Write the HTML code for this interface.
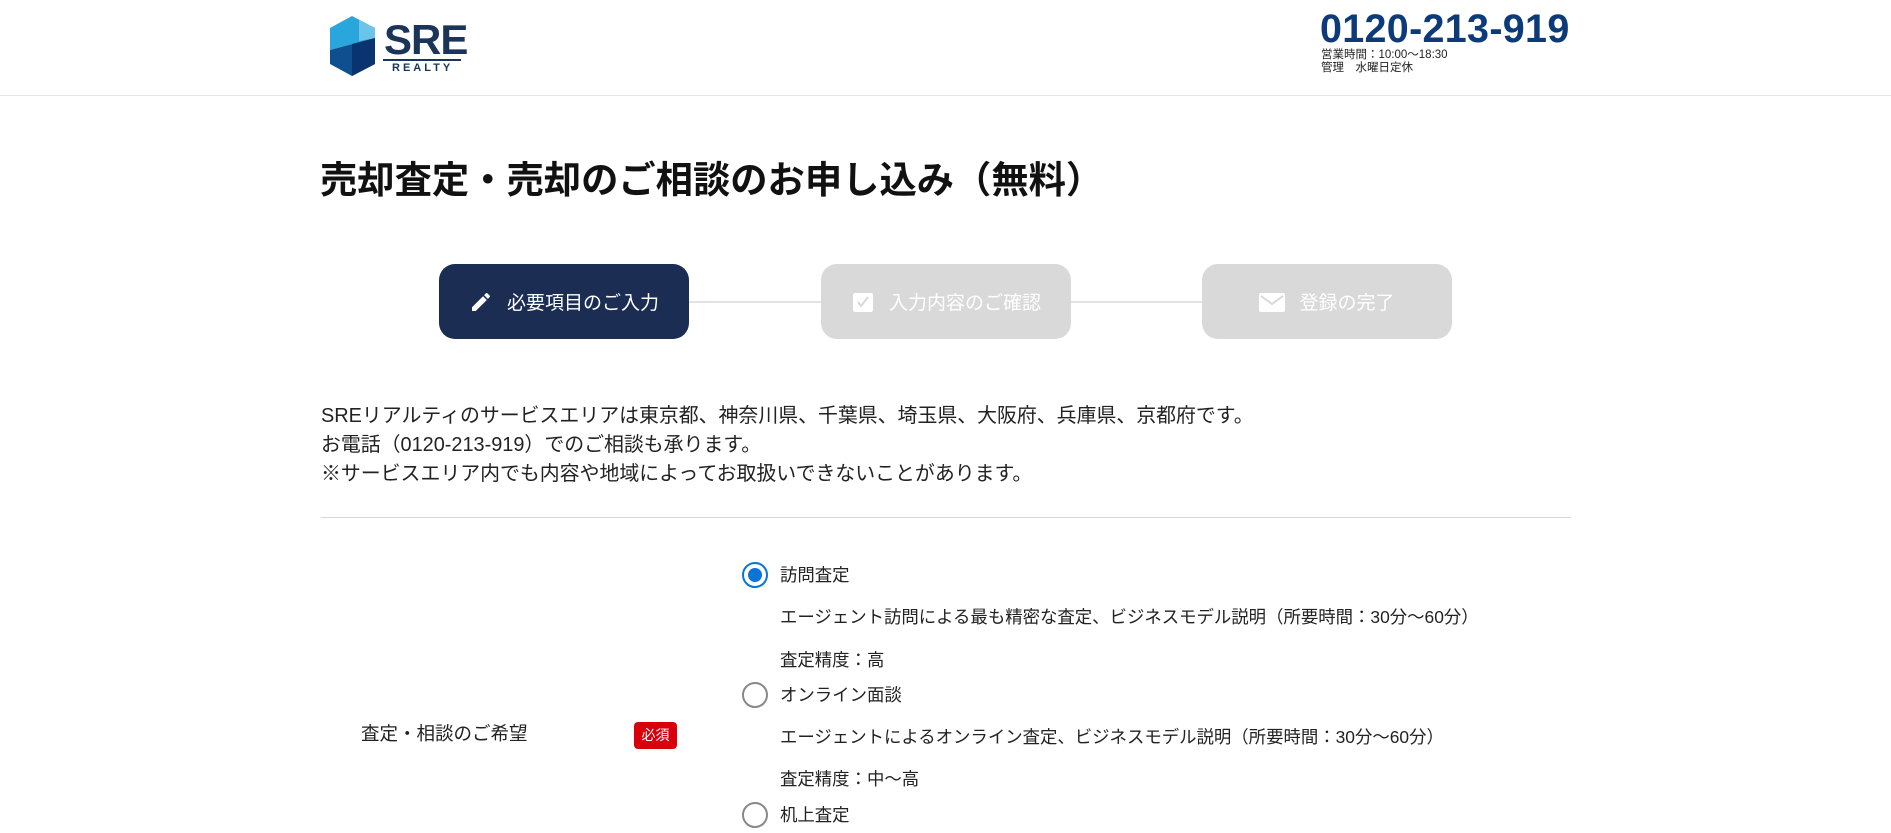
<!DOCTYPE html>
<html><head><meta charset="utf-8"><style>
*{margin:0;padding:0;box-sizing:border-box}
body{width:1891px;height:833px;overflow:hidden;background:#fff;font-family:"Liberation Sans","Noto Sans CJK JP",sans-serif;color:#222;position:relative}
.a{position:absolute;white-space:nowrap}
.hdr{position:absolute;left:0;top:0;width:1891px;height:96px;border-bottom:1px solid #e6e6e6}
.step{position:absolute;top:264px;width:250px;height:75px;border-radius:16px;background:#d9d9d9;color:#fff;font-size:19px;display:flex;align-items:center;justify-content:center;gap:14px}
.p{font-size:19.9px;line-height:29px}
.r{font-size:17.4px}
.rad{position:absolute;width:26px;height:26px;border-radius:50%;border:2px solid #888;background:#fff}
</style></head><body>
<div class="hdr"></div>
<svg class="a" style="left:330px;top:16px" width="45" height="60" viewBox="0 0 45 60">
<polygon points="0,12 22,0 45,12 45,22 0,34" fill="#29a6dc"/>
<polygon points="22,0 45,12 45,22 29,25 29,4" fill="#6cc4ea"/>
<polygon points="0,34 45,22 45,48 22,60 0,48" fill="#0f4f8f"/>
<polygon points="22,28 45,22 45,48 22,60" fill="#0a3470"/>
</svg>
<div class="a" style="left:384px;top:16px;font-size:42px;font-weight:bold;color:#1b3558;letter-spacing:-1px">SRE</div>
<div class="a" style="left:383px;top:59px;width:78px;border-top:2px solid #1b3558"></div>
<div class="a" style="left:392px;top:62px;font-size:11px;font-weight:bold;color:#1b3558;letter-spacing:3px">REALTY</div>
<div class="a" style="left:1320px;top:7px;font-size:39.5px;font-weight:bold;color:#0d3a78;letter-spacing:0.3px">0120-213-919</div>
<div class="a" style="left:1321px;top:49px;font-size:11.5px;line-height:13px;color:#222">営業時間：10:00〜18:30<br>管理　水曜日定休</div>
<div class="a" style="left:320px;top:150px;font-size:37.3px;font-weight:bold;color:#111">売却査定・売却のご相談のお申し込み（無料）</div>
<div class="a" style="left:689px;top:301px;width:513px;border-top:2px solid #e3e3e3"></div>
<div class="step" style="left:439px;background:#1b2d52">
<svg width="24" height="24" viewBox="0 0 24 24"><path d="M3 17.25V21h3.75L17.8 9.94l-3.75-3.75L3 17.25zM20.7 7.04a1 1 0 000-1.41l-2.34-2.34a1 1 0 00-1.41 0l-1.83 1.83 3.75 3.75 1.83-1.83z" fill="#fff"/></svg>
<span>必要項目のご入力</span></div>
<div class="step" style="left:821px">
<svg width="24" height="24" viewBox="0 0 24 24"><rect x="2" y="3" width="20" height="19" rx="2" fill="#fff"/><path d="M7 12l3 4 7-9" stroke="#d9d9d9" stroke-width="2" fill="none"/></svg>
<span>入力内容のご確認</span></div>
<div class="step" style="left:1202px">
<svg width="26" height="22" viewBox="0 0 26 22"><rect x="0" y="2" width="26" height="19" rx="2" fill="#fff"/><path d="M2 5l11 8 11-8" stroke="#d9d9d9" stroke-width="2" fill="none"/></svg>
<span>登録の完了</span></div>
<div class="a p" style="left:321px;top:402px">SREリアルティのサービスエリアは東京都、神奈川県、千葉県、埼玉県、大阪府、兵庫県、京都府です。<br>お電話（0120-213-919）でのご相談も承ります。<br>※サービスエリア内でも内容や地域によってお取扱いできないことがあります。</div>
<div class="a" style="left:321px;top:517px;width:1250px;border-top:1px solid #d6d6d6"></div>
<div class="a" style="left:361px;top:720px;font-size:18.5px">査定・相談のご希望</div>
<div class="a" style="left:634px;top:722px;width:43px;height:27px;background:#d9000e;color:#fff;border-radius:4px;font-size:14px;line-height:27px;text-align:center">必須</div>
<div class="rad" style="left:742px;top:562px;border-color:#0b74d6"><div style="position:absolute;left:4px;top:4px;width:14px;height:14px;border-radius:50%;background:#0b74d6"></div></div>
<div class="rad" style="left:742px;top:682px"></div>
<div class="rad" style="left:742px;top:802px"></div>
<div class="a r" style="left:780px;top:562px">訪問査定</div>
<div class="a r" style="left:780px;top:604px">エージェント訪問による最も精密な査定、ビジネスモデル説明（所要時間：30分〜60分）</div>
<div class="a r" style="left:780px;top:647px">査定精度：高</div>
<div class="a r" style="left:780px;top:682px">オンライン面談</div>
<div class="a r" style="left:780px;top:724px">エージェントによるオンライン査定、ビジネスモデル説明（所要時間：30分〜60分）</div>
<div class="a r" style="left:780px;top:766px">査定精度：中〜高</div>
<div class="a r" style="left:780px;top:802px">机上査定</div>
</body></html>
